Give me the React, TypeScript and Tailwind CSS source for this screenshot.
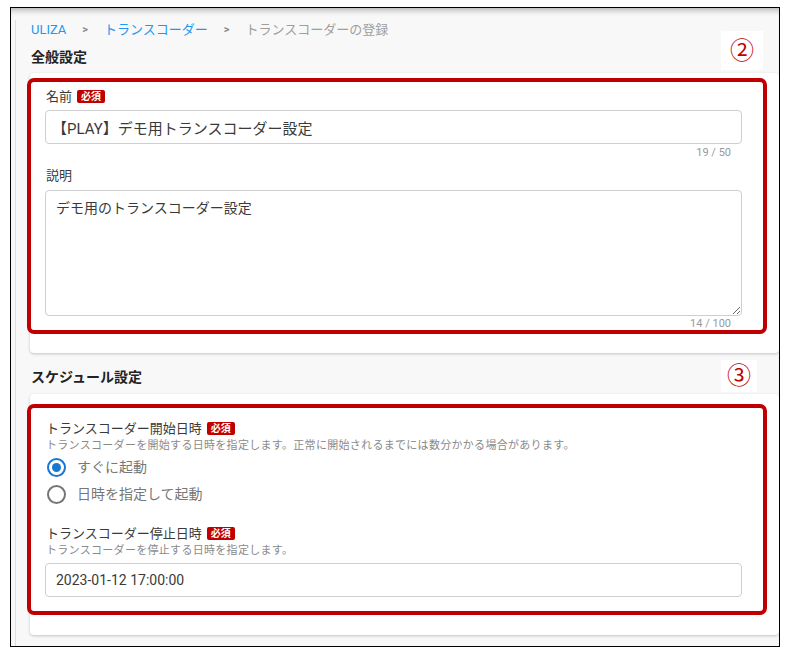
import React from "react";

const FONT = {
  fontFamily: 'Roboto, "Noto Sans CJK JP", "Noto Sans", sans-serif',
};

function Required() {
  return (
    <span className="ml-[5px] inline-flex h-[13px] items-center rounded-[2px] bg-[#c00000] px-[4px] text-[10px] font-bold leading-none text-white">
      必須
    </span>
  );
}

function Label({ children, required }: { children: React.ReactNode; required?: boolean }) {
  return (
    <div className="flex h-[17px] items-center pl-[1px] text-[13px] leading-none text-[#3a3a3a]">
      <span>{children}</span>
      {required && <Required />}
    </div>
  );
}

function Radio({ checked, label }: { checked?: boolean; label: string }) {
  return (
    <div className="flex h-[27px] items-center">
      <span
        className={
          checked
            ? "ml-[2px] flex h-[19px] w-[19px] items-center justify-center rounded-full border-2 border-[#1976d2]"
            : "ml-[2px] flex h-[19px] w-[19px] items-center justify-center rounded-full border-2 border-[#757575]"
        }
      >
        {checked && <span className="h-[9px] w-[9px] rounded-full bg-[#1976d2]" />}
      </span>
      <span className="ml-[11px] text-[14px] text-[#777]">{label}</span>
    </div>
  );
}

function Marker({ children }: { children: string }) {
  return (
    <span className="flex h-full w-full items-center justify-center bg-white text-[24px] leading-none text-[#c00000]">
      {children}
    </span>
  );
}

export default function App() {
  return (
    <div className="relative h-[653px] w-[788px] overflow-hidden bg-white" style={FONT}>
      <div className="ml-[10px] mt-[7px] h-[640px] w-[770px] overflow-hidden border border-black bg-[#f8f8f8] shadow-[inset_0_7px_6px_-5px_rgba(0,0,0,0.3)]">
        <div className="ml-[4px] h-full border-l border-[#dedede] pl-[14px]">
          {/* breadcrumb */}
          <div className="mt-[12px] flex h-[18px] items-center text-[13px] leading-none">
            <span className="pl-[1px] text-[#2196f3]">ULIZA</span>
            <span className="mx-[16px] text-[11px] font-bold text-[#888]">&gt;</span>
            <span className="text-[#2196f3]">トランスコーダー</span>
            <span className="mx-[16px] text-[11px] font-bold text-[#888]">&gt;</span>
            <span className="text-[#9e9e9e]">トランスコーダーの登録</span>
          </div>

          <h2 className="mt-[9px] flex h-[20px] items-center pl-[1px] text-[14px] font-bold text-[#222]">
            全般設定
          </h2>

          {/* card 1 */}
          <div className="mt-[6px] rounded-[4px] bg-white pb-[19px] pt-[5px] shadow-[0_1px_3px_rgba(0,0,0,0.22)]">
            <div className="-ml-[3px] mr-[12px] rounded-[7px] border-4 border-[#c00000] pl-[14px] pr-[21px] pt-[6px]">
              <Label required>名前</Label>
              <input
                readOnly
                defaultValue="【PLAY】デモ用トランスコーダー設定"
                className="mt-[5px] block h-[34px] w-full rounded-[4px] border border-[#cfcfcf] px-[6px] text-[15px] text-[#3a3a3a] outline-none"
                style={FONT}
              />
              <div className="mt-[2px] h-[14px] pr-[11px] text-right text-[11px] leading-[14px] text-[#999]">
                19 / 50
              </div>
              <div className="mt-[7px]">
                <Label>説明</Label>
              </div>
              <textarea
                readOnly
                defaultValue="デモ用のトランスコーダー設定"
                className="mt-[6px] block h-[126px] w-full rounded-[4px] border border-[#cfcfcf] px-[10px] py-[7px] text-[14px] text-[#3a3a3a] outline-none"
                style={FONT}
              />
              <div className="mt-[1px] h-[13px] pr-[11px] text-right text-[11px] leading-[13px] text-[#999]">
                14 / 100
              </div>
            </div>
          </div>

          <h2 className="mt-[14px] flex h-[20px] items-center pl-[1px] text-[14px] font-bold text-[#222]">
            スケジュール設定
          </h2>

          {/* card 2 */}
          <div className="mt-[7px] rounded-[4px] bg-white pb-[20px] pt-[10px] shadow-[0_1px_3px_rgba(0,0,0,0.22)]">
            <div className="-ml-[3px] mr-[12px] rounded-[7px] border-4 border-[#c00000] pb-[14px] pl-[14px] pr-[21px] pt-[12px]">
              <Label required>トランスコーダー開始日時</Label>
              <p className="mt-[2px] h-[14px] pl-[1px] text-[11px] leading-[14px] tracking-[0.3px] text-[#8a8a8a]">
                トランスコーダーを開始する日時を指定します。正常に開始されるまでには数分かかる場合があります。
              </p>
              <div className="mt-[1px]">
                <Radio checked label="すぐに起動" />
                <Radio label="日時を指定して起動" />
              </div>
              <div className="mt-[17px]">
                <Label required>トランスコーダー停止日時</Label>
              </div>
              <p className="mt-[2px] h-[14px] pl-[1px] text-[11px] leading-[14px] tracking-[0.3px] text-[#8a8a8a]">
                トランスコーダーを停止する日時を指定します。
              </p>
              <input
                readOnly
                defaultValue="2023-01-12 17:00:00"
                className="mt-[5px] block h-[34px] w-full rounded-[4px] border border-[#cfcfcf] px-[10px] text-[14px] text-[#3a3a3a] outline-none"
                style={FONT}
              />
            </div>
          </div>
        </div>
      </div>

      {/* annotation markers */}
      <div className="absolute left-[721px] top-[31px] h-[39px] w-[42px]">
        <Marker>②</Marker>
      </div>
      <div className="absolute left-[721px] top-[360px] h-[32px] w-[36px]">
        <Marker>③</Marker>
      </div>
    </div>
  );
}
